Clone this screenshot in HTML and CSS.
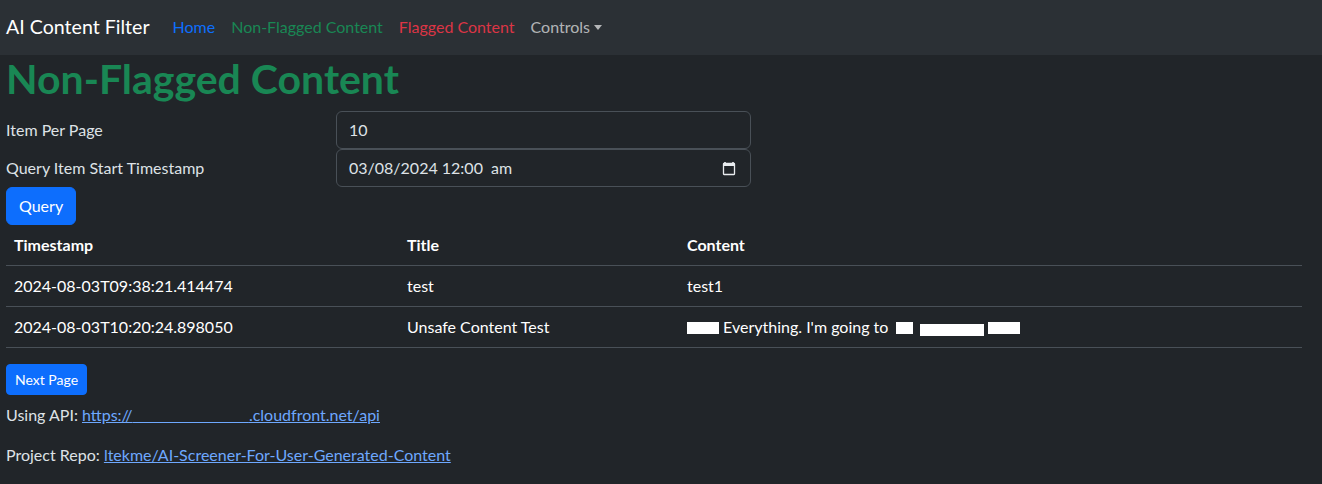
FILE: index.html
```html
<!DOCTYPE html>
<html lang="en">
<head>
<meta charset="utf-8">
<title>AI Content Filter</title>
<link rel="stylesheet" href="styles.css">
</head>
<body>
<nav class="navbar">
  <a class="brand" href="#">AI Content Filter</a>
  <ul class="nav">
    <li><a class="nav-link home" href="#">Home</a></li>
    <li><a class="nav-link ok" href="#">Non-Flagged Content</a></li>
    <li><a class="nav-link bad" href="#">Flagged Content</a></li>
    <li><a class="nav-link ctrl" href="#">Controls<span class="caret"></span></a></li>
  </ul>
</nav>
<main class="main">
  <h1 class="title">Non-Flagged Content</h1>
  <div class="form-grid">
    <label class="label">Item Per Page</label>
    <div class="control">10</div>
    <label class="label">Query Item Start Timestamp</label>
    <div class="control date">
      <span>03/08/2024 12:00&nbsp; am</span>
      <svg class="cal" width="14" height="15" viewBox="0 0 14 15"><path d="M3 1v2M11 1v2" stroke="#e9ecef" stroke-width="1.6" fill="none"/><rect x="1.5" y="2.5" width="11" height="11" rx="0.5" fill="none" stroke="#e9ecef" stroke-width="1.3"/><rect x="1.5" y="2.5" width="11" height="2.5" fill="#e9ecef"/></svg>
    </div>
  </div>
  <button class="btn">Query</button>
  <table class="table">
    <thead>
      <tr><th class="c1">Timestamp</th><th class="c2">Title</th><th>Content</th></tr>
    </thead>
    <tbody>
      <tr><td>2024-08-03T09:38:21.414474</td><td>test</td><td>test1</td></tr>
      <tr><td>2024-08-03T10:20:24.898050</td><td>Unsafe Content Test</td><td><span class="redact r1"></span> Everything. I'm going to <span class="redact r2"></span> <span class="redact r3"></span> <span class="redact r4"></span></td></tr>
    </tbody>
  </table>
  <div class="pager"><button class="btn btn-sm">Next Page</button></div>
  <p class="info">Using API: <a href="#">https://<span class="gap">&nbsp;&nbsp;&nbsp;&nbsp;</span>.cloudfront.net/api</a></p>
  <p class="info">Project Repo: <a href="#">ltekme/AI-Screener-For-User-Generated-Content</a></p>
</main>
</body>
</html>
```

FILE: styles.css
```css
* { box-sizing: border-box; }
html, body { margin: 0; padding: 0; }
body {
  background: #212529;
  color: #dee2e6;
  font-family: Lato, "Noto Sans", sans-serif;
  font-size: 16px;
  line-height: 1.5;
}
.navbar {
  display: flex;
  align-items: center;
  height: 55px;
  padding: 0 6px 2px;
  background: #2b3035;
}
.brand {
  color: #fff;
  text-decoration: none;
  font-size: 19.6px;
  margin-right: 15px;
}
.nav { display: flex; list-style: none; margin: 0; padding: 0; }
.nav-link { display: block; padding: 8px; text-decoration: none; }
.home { color: #0d6efd; }
.ok { color: #198754; }
.bad { color: #dc3545; }
.ctrl { color: rgba(255,255,255,0.65); }
.caret {
  display: inline-block;
  margin-left: 4px;
  vertical-align: 3px;
  border-top: 5px solid rgba(255,255,255,0.65);
  border-left: 4px solid transparent;
  border-right: 4px solid transparent;
}
.main { padding: 0 20px 0 6px; }
.title {
  margin: 0 0 8px;
  font-size: 41px;
  font-weight: 700;
  line-height: 48px;
  color: #198754;
}
.form-grid {
  display: grid;
  grid-template-columns: 330px 415px;
  align-items: center;
}
.label { line-height: 24px; }
.control {
  height: 38px;
  padding: 6px 12px;
  border: 1px solid #495057;
  border-radius: 6px;
  background: #212529;
  color: #dee2e6;
}
.date { display: flex; justify-content: space-between; align-items: center; }
.cal { margin-right: 2px; }
.btn {
  display: inline-block;
  font-family: inherit;
  font-size: 16px;
  line-height: 1.5;
  padding: 6px 12px;
  color: #fff;
  background: #0d6efd;
  border: 1px solid #0d6efd;
  border-radius: 6px;
}
.btn-sm { font-size: 14px; padding: 4px 8px; border-radius: 4px; }
.table { width: 100%; border-collapse: collapse; margin-bottom: 16px; }
.table th, .table td {
  text-align: left;
  padding: 8px;
  border-bottom: 1px solid #495057;
  color: #fff;
}
.table th { font-weight: 700; }
.table td { height: 41px; }
.c1 { width: 393px; }
.c2 { width: 280px; }
.redact { display: inline-block; background: #fff; height: 12px; vertical-align: -1px; }
.r1 { width: 32px; }
.r2 { width: 17px; margin-left: 4px; }
.r3 { width: 64px; vertical-align: -3px; margin-left: 2px; }
.r4 { width: 32px; }
.pager { margin-bottom: 8px; }
.info { margin: 0 0 16px; }
.info a { color: #6ea8fe; }
.gap { letter-spacing: 25px; }
```
